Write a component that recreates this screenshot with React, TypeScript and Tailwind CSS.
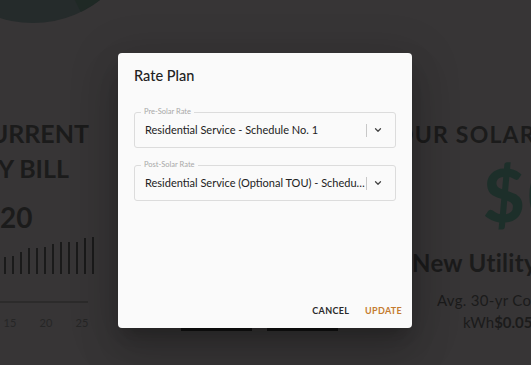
import React from 'react';

const bars = [17, 18, 22, 26, 26, 27, 30, 32, 32, 32, 36, 37];

const Chevron = () => (
  <svg width="10" height="10" viewBox="0 0 24 24" fill="none" stroke="#444" strokeWidth="3" strokeLinecap="round" strokeLinejoin="round">
    <path d="M6 9l6 6 6-6" />
  </svg>
);

const RateSelect: React.FC<{ label: string; value: string }> = ({ label, value }) => (
  <div className="relative h-[36px] rounded-[3px] border border-[#dcdcdc] flex items-center pl-[10px] pr-[12px]">
    <span className="absolute -top-[6px] left-[6px] px-[3px] bg-[#fafafa] text-[7.5px] leading-[10px] text-[#a8a8a8]">{label}</span>
    <span className="flex-1 min-w-0 truncate text-[11px] text-[#222]">{value}</span>
    <span className="w-px h-[13px] bg-[#c8c8c8]" />
    <span className="ml-[6px] flex items-center"><Chevron /></span>
  </div>
);

export default function App() {
  return (
    <div className="relative w-[531px] h-[365px] overflow-hidden bg-[#373536]" style={{ fontFamily: 'Lato, "Open Sans", sans-serif' }}>
      {/* dimmed page behind the dialog */}
      <div className="flex h-full text-[#1b1b1b]">
        <div className="w-[100px] shrink-0 flex flex-col">
          <svg width="110" height="23" viewBox="0 0 110 23" className="shrink-0">
            <circle cx="33" cy="-86" r="109" fill="#252b2b" />
            <path d="M33 -86 L80.8 12 A109 109 0 0 0 142 -86 Z" fill="#1f2925" />
          </svg>
          <div className="mt-[93px] w-[89px] flex justify-end whitespace-nowrap text-[25px] font-bold leading-[35px]">YOUR CURRENT</div>
          <div className="w-[69px] flex justify-end whitespace-nowrap text-[25px] font-bold leading-[35px]">UTILITY BILL</div>
          <div className="mt-[17px] text-[28px] font-bold leading-[28px]">20</div>
          <div className="mt-[5px] h-[38px] flex items-end gap-[6px] pl-[4px]">
            {bars.map((h, i) => (
              <div key={i} className="w-[2px] shrink-0 bg-[#1a1a1a]" style={{ height: h }} />
            ))}
          </div>
          <div className="mt-[27px] w-[88px] h-[2px] bg-[#2c2b2b]" />
          <div className="mt-[13px] -ml-[8px] flex text-[11px] leading-[14px] text-[#262626]">
            <span className="w-[39px] text-center">15</span>
            <span className="w-[39px] text-center">20</span>
            <span className="w-[39px] text-center">25</span>
          </div>
        </div>
        <div className="flex-1 flex items-end gap-[15px] pl-[81px] pb-[34px]">
          <div className="w-[71px] h-[6px] bg-[#121212]" />
          <div className="w-[71px] h-[6px] bg-[#121212]" />
        </div>
        <div className="w-[134px] shrink-0 pt-[122px] flex flex-col whitespace-nowrap">
          <div className="-ml-[2px] text-[23px] font-bold leading-[25px] tracking-[1.2px]">OUR SOLAR</div>
          <div className="mt-[11px] ml-[86px] text-[72px] font-black leading-[72px] tracking-[3px] text-[#1d2f2a]">$0</div>
          <div className="mt-[19px] ml-[15px] text-[24px] font-bold leading-[28px] tracking-[0.3px]">New Utility</div>
          <div className="mt-[13px] ml-[40px] text-[15px] leading-[20px] tracking-[0.3px]">Avg. 30-yr Cost</div>
          <div className="mt-[2px] ml-[66px] text-[15px] leading-[20px]">kWh<span className="font-bold">$0.05</span></div>
        </div>
      </div>

      {/* dialog */}
      <div className="absolute left-[118px] top-[53px] w-[294px] h-[275px] rounded-[4px] bg-[#fafafa] shadow-[0_11px_15px_-7px_rgba(0,0,0,0.2),0_24px_38px_3px_rgba(0,0,0,0.14),0_9px_46px_8px_rgba(0,0,0,0.12)] flex flex-col">
        <div className="pt-[13px] pl-[16px] text-[14.5px] font-medium leading-[20px] text-[#222]">Rate Plan</div>
        <div className="mt-[26px] px-[16px] flex flex-col gap-[17px]">
          <RateSelect label="Pre-Solar Rate" value="Residential Service - Schedule No. 1" />
          <RateSelect label="Post-Solar Rate" value="Residential Service (Optional TOU) - Schedule No. 1" />
        </div>
        <div className="mt-auto pb-[6px] pr-[6px] flex justify-end items-center gap-[8px]">
          <button className="px-[4px] h-[22px] text-[9px] font-bold tracking-[0.3px] text-[#2a2a2a]">CANCEL</button>
          <button className="px-[4px] h-[22px] text-[9px] font-bold tracking-[0.3px] text-[#c47b2f]">UPDATE</button>
        </div>
      </div>
    </div>
  );
}
